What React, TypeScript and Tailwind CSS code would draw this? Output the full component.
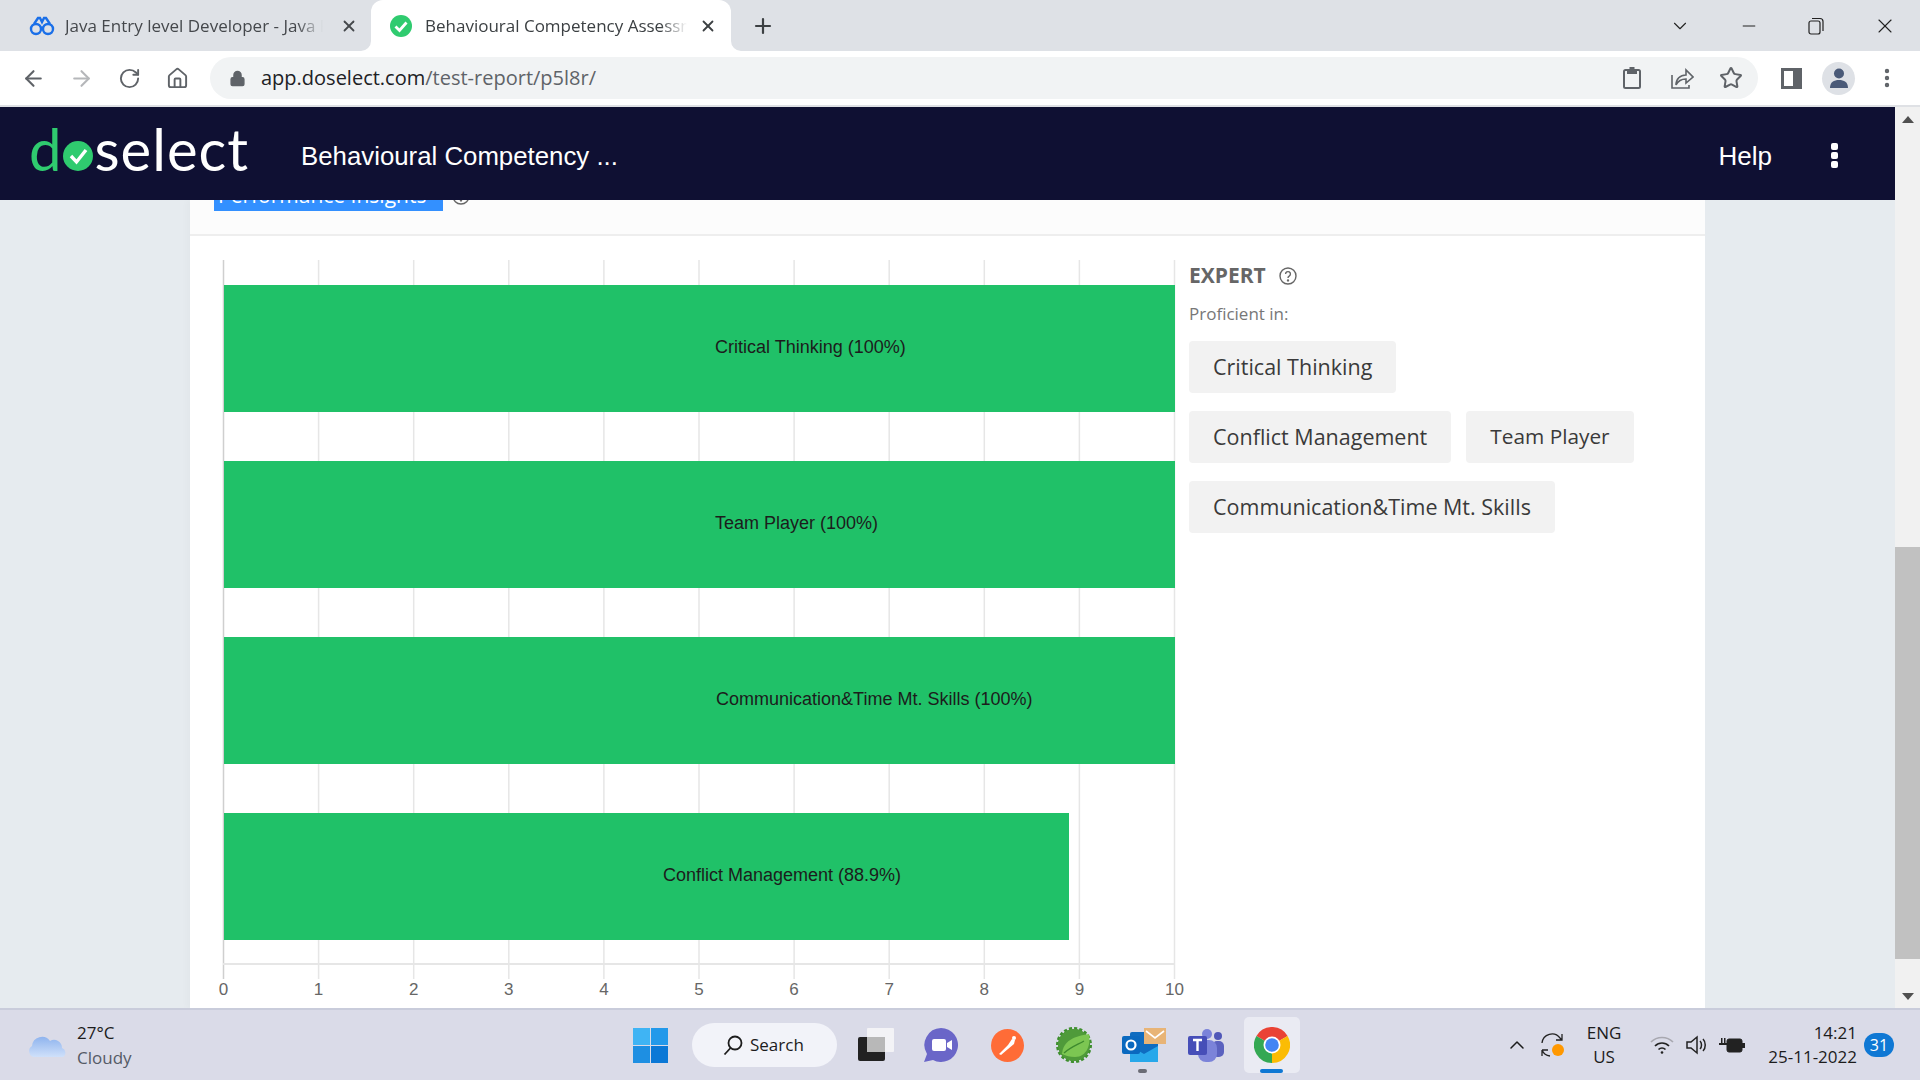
import { ArrowLeft, ArrowRight, ChevronDown, ChevronUp, Home, Lock, Minus, MoreVertical, Plus, RotateCw, Star, X } from "lucide-react";

// ---- chart data ----
const bars = [
  { label: "Critical Thinking (100%)", top: 49, width: 951, textX: 525 },
  { label: "Team Player (100%)", top: 225, width: 951, textX: 525 },
  { label: "Communication&Time Mt. Skills (100%)", top: 401, width: 951, textX: 526 },
  { label: "Conflict Management (88.9%)", top: 577, width: 845, textX: 473 },
];
const ticks = [0, 1, 2, 3, 4, 5, 6, 7, 8, 9, 10];

function PerformanceChart() {
  return (
    <svg width="999" height="772" className="block shrink-0">
      {ticks.map((t) => (
        <line key={t} x1={33.5 + t * 95.1} x2={33.5 + t * 95.1} y1="24" y2="743" stroke={t === 0 ? "#cfcfcf" : "#e6e6e6"} strokeWidth="1.5" />
      ))}
      <line x1="33" x2="985" y1="728" y2="728" stroke="#e6e6e6" strokeWidth="2" />
      {bars.map((b) => (
        <g key={b.label}>
          <rect x="34" y={b.top} width={b.width} height="127" fill="#20c168" />
          <text x={b.textX} y={b.top + 63} fontFamily="Liberation Sans" fontSize="18" fill="#1c1c1c" dominantBaseline="middle">
            {b.label}
          </text>
        </g>
      ))}
      {ticks.map((t) => (
        <text key={t} x={33.5 + t * 95.1} y="755" textAnchor="middle" dominantBaseline="middle" fontFamily="Liberation Sans" fontSize="17" fill="#666666">
          {t}
        </text>
      ))}
    </svg>
  );
}

function Chip({ children }: { children: string }) {
  return (
    <span className="flex h-[52px] items-center rounded-[4px] bg-[#f2f2f2] px-6 text-[21.5px] text-[#3a3a3a]">{children}</span>
  );
}

function HelpCircle({ size = 18 }: { size?: number }) {
  return (
    <svg width={size} height={size} viewBox="0 0 18 18" fill="none" stroke="#666" strokeWidth="1.4">
      <circle cx="9" cy="9" r="8" />
      <path d="M6.6 7a2.4 2.4 0 1 1 3.6 2.1c-.8.5-1.2.9-1.2 1.9" />
      <circle cx="9" cy="13.4" r=".5" fill="#666" />
    </svg>
  );
}

function TabBar() {
  return (
    <div className="flex h-[51px] shrink-0 items-center bg-[#dee1e6] font-['Open_Sans',sans-serif] text-[17px] text-[#45484c]">
      <div className="flex h-full w-[371px] items-center pl-[29px]">
        <svg width="26" height="20" viewBox="0 0 26 20" fill="none" stroke="#1a6fe8" strokeWidth="2.4" className="shrink-0">
          <circle cx="7" cy="13" r="5" />
          <circle cx="19" cy="13" r="5" />
          <path d="M5 8l4-6h2l2 4 2-4h2l4 6M12 12h2" />
        </svg>
        <span className="ml-[10px] w-[258px] overflow-hidden whitespace-nowrap [mask-image:linear-gradient(90deg,#000_90%,transparent)]">
          Java Entry level Developer - Java Full Stack
        </span>
        <X size={18} strokeWidth={2.4} className="ml-[17px] text-[#45484c]" />
      </div>
      <div className="relative flex h-full w-[360px] items-center rounded-t-[12px] bg-white pl-[19px] text-[#3c4043]">
        {/* flared bottom corners of the active tab */}
        <svg width="10" height="10" viewBox="0 0 10 10" className="absolute bottom-0 -left-[10px]">
          <path d="M10 0v10H0a10 10 0 0 0 10-10z" fill="#fff" />
        </svg>
        <svg width="10" height="10" viewBox="0 0 10 10" className="absolute bottom-0 -right-[10px]">
          <path d="M0 0v10h10A10 10 0 0 1 0 0z" fill="#fff" />
        </svg>
        <svg width="22" height="22" viewBox="0 0 22 22" className="shrink-0">
          <circle cx="11" cy="11" r="11" fill="#2fcb6f" />
          <path d="M5.5 11.5l4 4 7-8" fill="none" stroke="#fff" strokeWidth="2.8" />
        </svg>
        <span className="ml-[13px] w-[262px] overflow-hidden whitespace-nowrap [mask-image:linear-gradient(90deg,#000_90%,transparent)]">
          Behavioural Competency Assessment
        </span>
        <X size={18} strokeWidth={2.4} className="ml-[12px]" />
      </div>
      <Plus size={24} strokeWidth={2.2} className="ml-[20px] text-[#3c4043]" />
      <div className="flex-1" />
      <ChevronDown size={22} strokeWidth={1.2} className="text-[#222]" />
      <Minus size={20} strokeWidth={1.2} className="ml-[48px] text-[#222]" />
      <svg width="16" height="18" viewBox="0 0 16 18" fill="none" stroke="#222" strokeWidth="1.2" className="ml-[49px]">
        <rect x="1" y="4" width="11" height="13" rx="2" />
        <path d="M4 1.5h8a3 3 0 0 1 3 3V14" />
      </svg>
      <X size={24} strokeWidth={1.1} className="ml-[49px] mr-[23px] text-[#222]" />
    </div>
  );
}

function Toolbar() {
  return (
    <div className="flex h-[56px] shrink-0 items-center border-b-2 border-[#dfe1e5] bg-white text-[#5f6368]">
      <ArrowLeft size={25} strokeWidth={2} className="ml-[21px]" />
      <ArrowRight size={25} strokeWidth={2} className="ml-[23px] text-[#b5b7ba]" />
      <RotateCw size={23} strokeWidth={2} className="ml-[24px]" />
      <Home size={23} strokeWidth={2} className="ml-[25px]" />
      <div className="ml-[21px] flex h-[42px] w-[1548px] items-center rounded-full bg-[#f1f3f4]">
        <Lock size={17} fill="#5f6368" strokeWidth={2} className="ml-[19px]" />
        <span className="ml-[15px] font-['Open_Sans',sans-serif] text-[20px] text-[#5f6368]">
          <span className="text-[#202124]">app.doselect.com</span>/test-report/p5l8r/
        </span>
        <div className="flex-1" />
        <svg width="20" height="24" viewBox="0 0 20 24" fill="none" stroke="#5f6368" strokeWidth="2" className="mr-[2px]">
          <rect x="2" y="4" width="16" height="18" rx="1.5" />
          <path d="M6 4h8v3H6zM8.5 2h3v2h-3z" fill="#5f6368" />
        </svg>
        <svg width="24" height="24" viewBox="0 0 24 24" fill="none" stroke="#5f6368" strokeWidth="1.6" className="ml-[26px]">
          <path d="M2 9v13h17v-3" />
          <path d="M6 19c0-6 4-10 10-10V4l7 7-7 6v-4c-4 0-8 2-10 6z" />
        </svg>
        <Star size={24} strokeWidth={2} className="ml-[25px] mr-[15px]" />
      </div>
      <div className="ml-[23px] flex h-[21px] w-[21px] border-[3px] border-[#5f6368] bg-white">
        <div className="ml-auto h-full w-[6px] bg-[#5f6368]" />
      </div>
      <div className="ml-[20px] flex h-[33px] w-[33px] items-center justify-center overflow-hidden rounded-full bg-[#dee1e6]">
        <svg width="22" height="24" viewBox="0 0 22 24" fill="#4a5a78">
          <circle cx="11" cy="7.5" r="5" />
          <path d="M2 22c0-6 4-8 9-8s9 2 9 8z" />
        </svg>
      </div>
      <MoreVertical size={24} strokeWidth={2.4} className="ml-[20px]" />
    </div>
  );
}

function Logo() {
  return (
    <div className="-mt-[10px] flex h-[56px] w-[222px] items-center font-['Lato',sans-serif] text-[58px] font-normal leading-none tracking-[1px]">
      <span className="text-[#2fcb6f]">d</span>
      <svg width="30" height="30" viewBox="0 0 30 30" className="ml-[1px] mr-[1px] mt-[14px] shrink-0">
        <circle cx="15" cy="15" r="15" fill="#2fcb6f" />
        <path d="M8 15l5.5 6L23 9" fill="none" stroke="#fff" strokeWidth="3.4" />
      </svg>
      <span className="text-white">select</span>
    </div>
  );
}

function Scrollbar() {
  return (
    <div className="flex w-[25px] shrink-0 flex-col bg-[#f1f1f1]">
      <svg width="25" height="25" viewBox="0 0 25 25" className="shrink-0">
        <path d="M7 16l6-7 6 7z" fill="#505050" />
      </svg>
      <div className="mt-[415px] h-[412px] bg-[#c1c1c1]" />
      <div className="flex-1" />
      <svg width="25" height="25" viewBox="0 0 25 25" className="shrink-0">
        <path d="M7 10l6 7 6-7z" fill="#505050" />
      </svg>
    </div>
  );
}

function Report() {
  return (
    <div className="min-h-0 flex-1 overflow-hidden bg-[#e6ebef]">
      <div className="ml-[190px] w-[1515px] bg-white shadow-[-4px_0_6px_rgba(0,0,0,0.02)]">
        <div className="h-[36px] overflow-hidden border-b-2 border-[#eeeeee] bg-[#fcfcfc]">
          <div className="-mt-[20px] ml-[24px] flex items-center">
            <span className="flex h-[31px] w-[229px] items-center bg-[#3390ff] pl-1 font-['Open_Sans',sans-serif] text-[21px] text-white">
              Performance Insights
            </span>
            <span className="ml-[9px]">
              <HelpCircle />
            </span>
          </div>
        </div>
        <div className="flex h-[773px]">
          <PerformanceChart />
          <div className="pt-[26px] font-['Open_Sans',sans-serif]">
            <div className="flex h-[28px] items-center text-[21px] font-bold text-[#666666]">
              EXPERT
              <span className="ml-[13px]">
                <HelpCircle />
              </span>
            </div>
            <div className="mt-[12px] text-[17px] leading-[24px] text-[#777777]">Proficient in:</div>
            <div className="mt-[15px] flex flex-col gap-[18px]">
              <div className="flex">
                <Chip>Critical Thinking</Chip>
              </div>
              <div className="flex gap-[15px]">
                <Chip>Conflict Management</Chip>
                <span className="flex h-[52px] items-center rounded-[4px] bg-[#f2f2f2] px-6 text-[20.8px] text-[#3a3a3a]">Team Player</span>
              </div>
              <div className="flex">
                <Chip>Communication&Time Mt. Skills</Chip>
              </div>
            </div>
          </div>
        </div>
      </div>
    </div>
  );
}

function Taskbar() {
  return (
    <div className="flex h-[72px] shrink-0 items-center border-t-2 border-[#c9ccdb] bg-[#dadbe8] font-['Open_Sans',sans-serif] text-[#1c1c1c]">
      <svg width="40" height="30" viewBox="0 0 40 30" className="ml-[28px] shrink-0">
        <defs>
          <linearGradient id="cloud" x1="0" y1="0" x2="0" y2="1">
            <stop offset="0" stopColor="#8fb4ee" />
            <stop offset="1" stopColor="#cfe0fa" />
          </linearGradient>
        </defs>
        <path d="M6 27a6 6 0 0 1-2-11 10 10 0 0 1 18-5 8 8 0 0 1 12 7 5 5 0 0 1 1 9z" fill="url(#cloud)" />
      </svg>
      <div className="ml-[9px] w-[80px] text-[17px] leading-[25px]">
        <div>27°C</div>
        <div className="text-[#555a66]">Cloudy</div>
      </div>
      {/* pinned apps */}
      <svg width="35" height="35" viewBox="0 0 35 35" className="ml-[476px] shrink-0">
        <rect width="17" height="17" fill="#3fb4f4" />
        <rect x="18" width="17" height="17" fill="#2399ea" />
        <rect y="18" width="17" height="17" fill="#1e8fe2" />
        <rect x="18" y="18" width="17" height="17" fill="#0b78d6" />
      </svg>
      <div className="ml-[24px] flex h-[44px] w-[145px] items-center rounded-full bg-[#f2f3f9] pl-[30px] text-[17px]">
        <svg width="22" height="22" viewBox="0 0 22 22" fill="none" stroke="#1c1c1c" strokeWidth="1.8">
          <circle cx="13" cy="9" r="6.5" />
          <path d="M8.5 14L2.5 20.5" />
        </svg>
        <span className="ml-[6px]">Search</span>
      </div>
      <svg width="36" height="34" viewBox="0 0 36 34" className="ml-[21px] shrink-0">
        <rect y="9" width="27" height="24" rx="2" fill="#222" />
        <rect x="9" y="0" width="27" height="24" rx="1" fill="#f3f3f6" />
        <rect x="9" y="9" width="18" height="15" fill="#b8b8b8" />
      </svg>
      <svg width="34" height="34" viewBox="0 0 34 34" className="ml-[30px] shrink-0">
        <path d="M17 0a17 17 0 1 1-8 32l-9 2 3-8A17 17 0 0 1 17 0z" fill="#6a66c8" />
        <rect x="8" y="11" width="14" height="12" rx="2" fill="#fff" />
        <path d="M23 15l5-3v10l-5-3z" fill="#fff" />
      </svg>
      <svg width="33" height="33" viewBox="0 0 33 33" className="ml-[33px] shrink-0">
        <circle cx="16.5" cy="16.5" r="16.5" fill="#ff6c37" />
        <path d="M8 25l9-9 4-6 3 1-1 4-6 5-7 6z" fill="#fff" />
        <circle cx="23" cy="9" r="2" fill="#fff" />
      </svg>
      <svg width="36" height="36" viewBox="0 0 36 36" className="ml-[32px] shrink-0">
        <circle cx="18" cy="18" r="16" fill="#3e8f2e" stroke="#3e8f2e" strokeWidth="4" strokeDasharray="3 2" />
        <circle cx="18" cy="18" r="16" fill="#4f9a3a" />
        <path d="M6 27C7 14 18 9 33 7c2 10-2 23-14 23-5 0-9-1-13-3z" fill="#7cc652" />
        <path d="M8 26c7-6 13-8 20-12" fill="none" stroke="#3d8a2e" strokeWidth="1.4" />
      </svg>
      <div className="relative ml-[30px] shrink-0">
        <svg width="44" height="34" viewBox="0 0 44 34" className="block">
          <rect x="8" y="4" width="28" height="30" rx="2" fill="#0f6cc0" />
          <path d="M8 18l14 8 14-8v16H8z" fill="#28a8ea" />
          <rect x="22" y="0" width="22" height="16" fill="#e8b476" />
          <path d="M24 3l9 7 9-7" fill="none" stroke="#fff" strokeWidth="1.6" />
          <rect y="8" width="18" height="18" rx="2" fill="#0a69bf" />
          <circle cx="9" cy="17" r="4.5" fill="none" stroke="#fff" strokeWidth="2.2" />
        </svg>
        <div className="absolute -bottom-[11px] left-[16px] h-[4px] w-[9px] rounded-full bg-[#6b6c75]" />
      </div>
      <svg width="36" height="34" viewBox="0 0 36 34" className="ml-[22px] shrink-0">
        <circle cx="19" cy="6" r="5" fill="#7b83d9" />
        <circle cx="30" cy="8" r="4" fill="#5058b8" />
        <rect x="24" y="13" width="12" height="16" rx="5" fill="#5b62bf" />
        <rect x="10" y="12" width="19" height="22" rx="8" fill="#7b83d9" />
        <rect y="8" width="19" height="19" rx="2" fill="#464eb8" />
        <path d="M5 12h9M9.5 12v11" stroke="#fff" strokeWidth="2.4" />
      </svg>
      <div className="relative ml-[20px] flex h-[56px] w-[56px] items-center justify-center rounded-[5px] bg-[#eaebf3]">
        <svg width="36" height="36" viewBox="0 0 36 36">
          <path d="M18 18L2.4 9A18 18 0 0 1 33.6 9z" fill="#ea4335" />
          <path d="M18 18L33.6 9A18 18 0 0 1 18 36z" fill="#fbbc04" />
          <path d="M18 18L18 36A18 18 0 0 1 2.4 9z" fill="#34a853" />
          <circle cx="18" cy="18" r="8.5" fill="#fff" />
          <circle cx="18" cy="18" r="6.8" fill="#4285f4" />
        </svg>
        <div className="absolute bottom-0 left-[16px] h-[4px] w-[23px] rounded-full bg-[#0f78d4]" />
      </div>
      {/* tray */}
      <div className="flex-1" />
      <ChevronUp size={24} strokeWidth={1.5} />
      <svg width="26" height="26" viewBox="0 0 26 26" fill="none" stroke="#222" strokeWidth="1.3" className="ml-[11px] shrink-0">
        <path d="M2 11a10 10 0 0 1 18-5l2 2M22 2v6h-6M2 18h6M2 18v6M2 18a10 10 0 0 0 8 6" />
        <circle cx="18" cy="18" r="6" fill="#ff9800" stroke="none" />
      </svg>
      <div className="ml-[20px] w-[36px] text-center text-[17px] leading-[24px]">
        <div>ENG</div>
        <div>US</div>
      </div>
      <svg width="24" height="20" viewBox="0 0 24 20" fill="none" stroke="#222" strokeWidth="1.7" className="ml-[28px] shrink-0">
        <path d="M1 7c6-6 16-6 22 0" stroke="#a8a8b0" />
        <path d="M5 11c4-4 10-4 14 0M8.5 14.5c2-2 5-2 7 0" />
        <circle cx="12" cy="17.5" r="1.3" fill="#222" stroke="none" />
      </svg>
      <svg width="24" height="22" viewBox="0 0 24 22" fill="none" stroke="#222" strokeWidth="1.5" className="ml-[12px] shrink-0">
        <path d="M1 8v6h4l6 5V3L5 8z" />
        <path d="M14 7c2 2 2 6 0 8M17 5c3 3 3 9 0 12" />
      </svg>
      <svg width="26" height="18" viewBox="0 0 26 18" className="ml-[9px] shrink-0">
        <rect x="8" y="3" width="15" height="13" rx="2" fill="#222" stroke="#222" strokeWidth="1" />
        <rect x="23" y="7" width="3" height="5" fill="#222" />
        <path d="M0 7h9v2H0zM2 2h1.5v5H2zM5 2h1.5v5H5z" fill="#222" />
      </svg>
      <div className="ml-[17px] w-[95px] text-right text-[17px] leading-[24px]">
        <div>14:21</div>
        <div>25-11-2022</div>
      </div>
      <div className="ml-[7px] mr-[26px] flex h-[24px] w-[30px] items-center justify-center rounded-full bg-[#0f78d4] text-[16px] text-white">
        31
      </div>
    </div>
  );
}

export default function App() {
  return (
    <div className="flex h-screen w-[1920px] flex-col overflow-hidden bg-white">
      <TabBar />
      <Toolbar />
      <div className="flex min-h-0 flex-1">
        <div className="flex min-w-0 flex-1 flex-col">
          <header className="flex h-[93px] shrink-0 items-center bg-[#0f1033] text-white">
            <div className="ml-[29px]">
              <Logo />
            </div>
            <span className="ml-[50px] mt-[6px] font-['Liberation_Sans',sans-serif] text-[25.8px]">Behavioural Competency ...</span>
            <div className="flex-1" />
            <span className="mt-[6px] font-['Liberation_Sans',sans-serif] text-[26px]">Help</span>
            <div className="ml-[59px] mr-[57px] mt-[4px] flex flex-col gap-[2px]">
              <div className="h-[7px] w-[7px] rounded-[2px] bg-white" />
              <div className="h-[7px] w-[7px] rounded-[2px] bg-white" />
              <div className="h-[7px] w-[7px] rounded-[2px] bg-white" />
            </div>
          </header>
          <Report />
        </div>
        <Scrollbar />
      </div>
      <Taskbar />
    </div>
  );
}
